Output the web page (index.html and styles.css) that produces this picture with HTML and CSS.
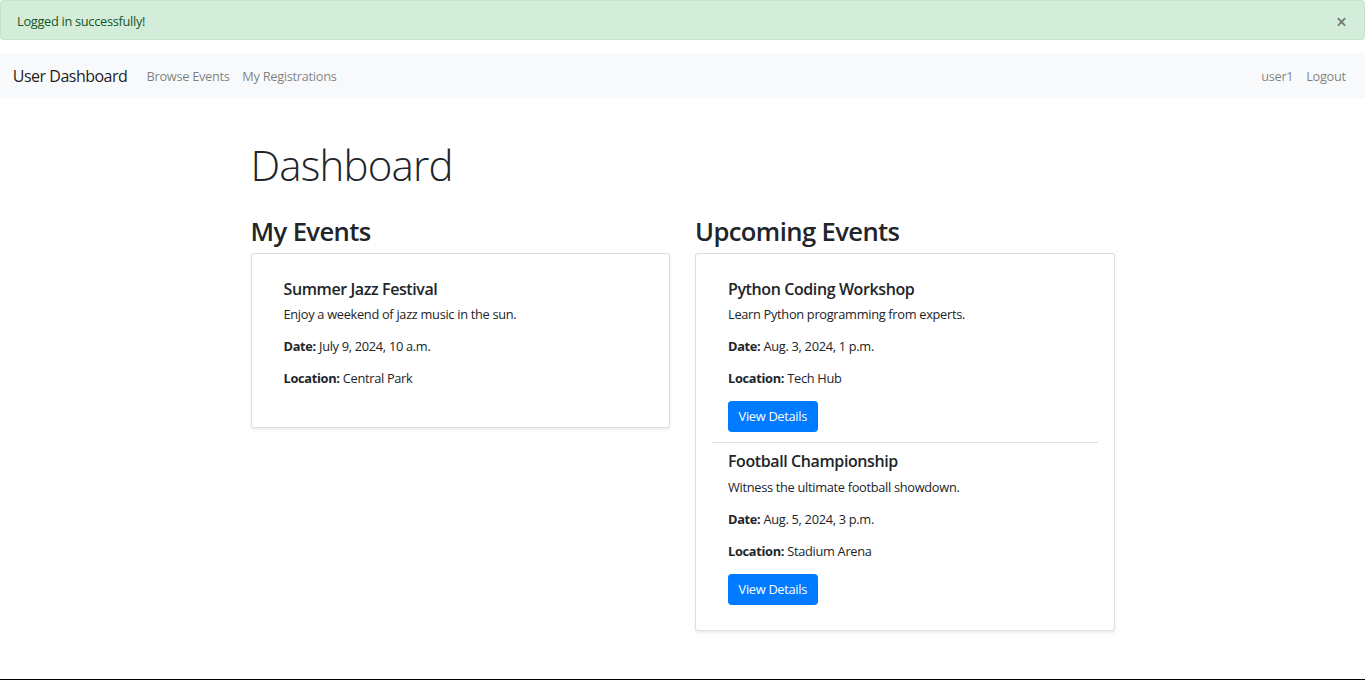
FILE: index.html
```html
<!DOCTYPE html>
<html lang="en">
<head>
<meta charset="utf-8">
<title>User Dashboard</title>
<link rel="stylesheet" href="styles.css">
</head>
<body>
<div class="alert">
  <span>Logged in successfully!</span>
  <button class="close" type="button" aria-label="Close">&times;</button>
</div>
<nav class="navbar">
  <a class="brand" href="#">User Dashboard</a>
  <ul class="nav">
    <li><a class="nav-link" href="#">Browse Events</a></li>
    <li><a class="nav-link" href="#">My Registrations</a></li>
  </ul>
  <ul class="nav nav-right">
    <li><a class="nav-link" href="#">user1</a></li>
    <li><a class="nav-link" href="#">Logout</a></li>
  </ul>
</nav>
<main class="container">
  <h1 class="display">Dashboard</h1>
  <div class="row">
    <section class="col">
      <h2>My Events</h2>
      <div class="card">
        <div class="card-body">
          <ul class="list">
            <li class="item">
              <h5>Summer Jazz Festival</h5>
              <p>Enjoy a weekend of jazz music in the sun.</p>
              <p><strong>Date:</strong> July 9, 2024, 10 a.m.</p>
              <p><strong>Location:</strong> Central Park</p>
            </li>
          </ul>
        </div>
      </div>
    </section>
    <section class="col">
      <h2>Upcoming Events</h2>
      <div class="card">
        <div class="card-body">
          <ul class="list">
            <li class="item">
              <h5>Python Coding Workshop</h5>
              <p>Learn Python programming from experts.</p>
              <p><strong>Date:</strong> Aug. 3, 2024, 1 p.m.</p>
              <p><strong>Location:</strong> Tech Hub</p>
              <a class="btn" href="#">View Details</a>
            </li>
            <li class="item">
              <h5>Football Championship</h5>
              <p>Witness the ultimate football showdown.</p>
              <p><strong>Date:</strong> Aug. 5, 2024, 3 p.m.</p>
              <p><strong>Location:</strong> Stadium Arena</p>
              <a class="btn" href="#">View Details</a>
            </li>
          </ul>
        </div>
      </div>
    </section>
  </div>
</main>
<footer class="footer"></footer>
</body>
</html>
```

FILE: styles.css
```css
* { box-sizing: border-box; }
html, body { margin: 0; padding: 0; }
body {
  font-family: "Open Sans", "Noto Sans", sans-serif;
  font-size: 12.8px;
  line-height: 19.2px;
  letter-spacing: -0.3px;
  color: #212529;
  background: #fff;
}
a { text-decoration: none; }

.alert {
  display: flex;
  align-items: center;
  justify-content: space-between;
  padding: 11px 17px 8px 16px;
  margin-bottom: 12.8px;
  background: #d4edda;
  border: 1px solid #c3e6cb;
  border-radius: 3.2px;
  color: #155724;
  height: 40px;
}
.close {
  background: none;
  border: 0;
  padding: 0;
  font-family: inherit;
  font-size: 19.2px;
  font-weight: 600;
  line-height: 1;
  color: #000;
  opacity: .5;
  cursor: pointer;
}

.navbar {
  display: flex;
  align-items: center;
  padding: 7.4px 12.8px 5.4px;
  background: #f8f9fa;
  height: 44.8px;
}
.brand {
  font-size: 16px;
  line-height: 24px;
  letter-spacing: -0.5px;
  padding: 4px 0;
  margin-right: 12.8px;
  color: rgba(0,0,0,.9);
}
.nav {
  display: flex;
  list-style: none;
  margin: 0;
  padding: 0;
}
.nav-right { margin-left: auto; }
.nav-link {
  display: block;
  padding: 6.4px 6.4px;
  color: rgba(0,0,0,.5);
}

.container {
  width: 864px;
  margin: 40.4px auto 0;
}
.display {
  font-size: 42px;
  font-weight: 300;
  line-height: 53.76px;
  letter-spacing: -0.8px;
  margin: 0 0 25.6px;
}
.row {
  display: flex;
  gap: 25px;
}
.col { flex: 1 1 0; min-width: 0; }
h2 {
  font-size: 25.6px;
  font-weight: 600;
  line-height: 30.72px;
  letter-spacing: -0.6px;
  margin: 0 0 5px;
}
.card {
  background: #fff;
  border: 1px solid rgba(0,0,0,.125);
  border-radius: 3.2px;
  box-shadow: 0 1.6px 3.2px rgba(0,0,0,.075);
}
.card-body { padding: 16px; }
.list { list-style: none; margin: 0; padding: 0; }
.item {
  padding: 9.6px 16px;
  border-bottom: 1px solid rgba(0,0,0,.125);
}
.item:last-child { border-bottom: 0; }
h5 {
  font-size: 16px;
  font-weight: 600;
  line-height: 19.2px;
  letter-spacing: -0.4px;
  margin: 0 0 6.4px;
}
p { margin: 0 0 12.8px; }
strong { font-weight: 700; }
.btn {
  display: inline-block;
  padding: 4.8px 9.6px;
  background: #007bff;
  border: 1px solid #007bff;
  border-radius: 3.2px;
  color: #fff;
  line-height: 19.2px;
}

.footer {
  margin-top: 48px;
  border-top: 1px solid #000;
}
```
